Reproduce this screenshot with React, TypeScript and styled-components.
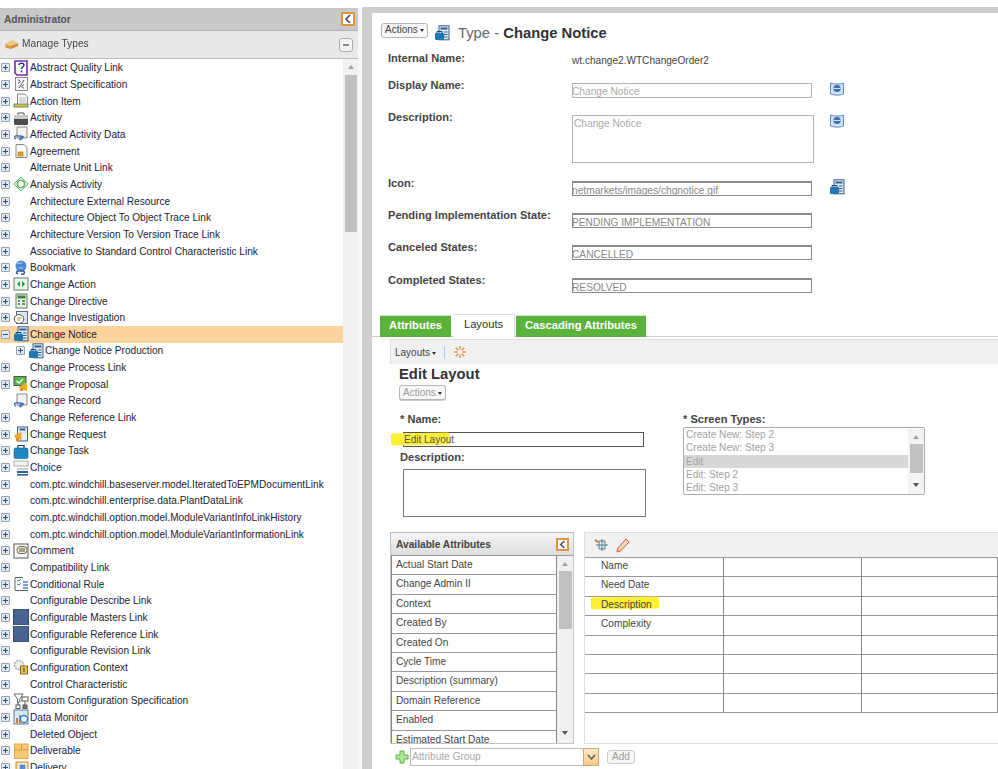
import React from "react";
import styled, { createGlobalStyle } from "styled-components";

const Global = createGlobalStyle`
  html, body { margin: 0; padding: 0; height: 769px; overflow: hidden; background: #fff; }
  body { font-family: "Liberation Sans", Arial, sans-serif; color: #333; }
  * { box-sizing: border-box; }
`;

const Page = styled.div`
  display: grid; grid-template-columns: 358px 4px 1fr; width: 998px; height: 769px; overflow: hidden;
  padding-top: 8px; filter: blur(0.3px);
`;
const Sidebar = styled.aside`display: flex; flex-direction: column; height: 761px; overflow: hidden;`;
const SideHeader = styled.div`
  height: 23px; flex: none; background: #c9c9c9; border-bottom: 1px solid #b0b0b0;
  display: flex; align-items: center; justify-content: space-between; padding: 0 3px 0 4px;
  font-size: 10.2px; font-weight: bold; color: #555;
`;
const Collapse = styled.span<{ $size?: number }>`
  width: ${p => p.$size ?? 14}px; height: ${p => p.$size ?? 14}px; border: 2px solid #e0973c; background: #fff;
  display: inline-flex; align-items: center; justify-content: center;
`;
const Accordion = styled.div`
  height: 28px; flex: none; background: #e9e9e9; border-bottom: 1px solid #bbb;
  display: flex; align-items: center; padding: 0 5px 0 4px; font-size: 10.2px; color: #444;
`;
const AccordionTitle = styled.span`margin-left: 3px; flex: 1; position: relative; top: -1px;`;
const MinusBtn = styled.span`
  width: 14px; height: 14px; border: 1px solid #aaa; border-radius: 3px; background: #f4f4f4;
  display: inline-flex; align-items: center; justify-content: center;
  &::after { content: ""; width: 6px; height: 2px; background: #888; }
`;
const TreeWrap = styled.div`display: grid; grid-template-columns: 343px 15px; flex: 1; min-height: 0;`;
const Tree = styled.ul`
  margin: 0; padding: 0.5px 0 0; list-style: none; overflow: hidden; background: #fff;
  display: grid; grid-auto-rows: 16.66px; align-content: start;
`;
const Row = styled.li<{ $selected?: boolean; $child?: boolean }>`
  display: flex; align-items: center; height: 16.66px; white-space: nowrap;
  padding-left: ${p => (p.$child ? 16 : 1)}px;
  background: ${p => (p.$selected ? "#fbd39c" : "transparent")};
  font-size: 10.15px; color: #1c2330;
`;
const Expander = styled.span<{ $open?: boolean; $hidden?: boolean }>`
  flex: none; width: 9px; height: 9px; border: 1px solid #9aa3ad; border-radius: 1px; background: #dfe9f3;
  position: relative; visibility: ${p => (p.$hidden ? "hidden" : "visible")};
  &::before { content: ""; position: absolute; left: 1px; right: 1px; top: 3px; height: 1px; background: #33507a; }
  &::after { content: ""; position: absolute; top: 1px; bottom: 1px; left: 3px; width: 1px; background: #33507a; display: ${p => (p.$open ? "none" : "block")}; }
`;
const IconSlot = styled.span`
  flex: none; width: 16px; height: 16px; margin: 0 1px 0 3px; display: inline-flex;
`;
const Scroll = styled.div`
  background: #f1f1f1; position: relative; display: flex; flex-direction: column; align-items: center;
`;
const ScrollThumb = styled.div<{ $top: number; $h: number }>`
  position: absolute; left: 2px; right: 1px; top: ${p => p.$top}px; height: ${p => p.$h}px; background: #c1c1c1;
`;
const ArrowUp = styled.span<{ $top: number }>`
  position: absolute; top: ${p => p.$top}px; left: 50%; margin-left: -3px;
  border: 3px solid transparent; border-top: 0; border-bottom: 4px solid #a3a3a3;
`;
const ArrowDown = styled.span<{ $bottom: number }>`
  position: absolute; bottom: ${p => p.$bottom}px; left: 50%; margin-left: -3px;
  border: 3px solid transparent; border-bottom: 0; border-top: 4px solid #555;
`;

const Gutter = styled.div`background: #f7f7f7;`;
const Main = styled.main`
  border-left: 10px solid #cdcdcd; border-top: 6px solid #cdcdcd; margin-top: -1px; height: 762px; overflow: hidden;
  background: #fff; display: flex; flex-direction: column; font-size: 11px;
`;
const Details = styled.section`height: 300px; flex: none; padding: 10px 0 0 8px; overflow: hidden;`;
const TitleRow = styled.div`display: flex; align-items: center; height: 20px; padding-left: 1px;`;
const ActionsBtn = styled.span<{ $disabled?: boolean; $raised?: boolean }>`
  display: inline-flex; align-items: center; gap: 2px; width: 47px; height: 15px; padding: 0 0 ${p => (p.$raised ? 2 : 0)}px 3px;
  border: 1px solid #b5b5b5; border-radius: 3px; background: #f8f8f8;
  font-size: 10px; color: ${p => (p.$disabled ? "#9a9a9a" : "#444")};
  box-shadow: ${p => (p.$disabled ? "0 1px 0 #ccc" : "none")};
  align-self: ${p => (p.$raised ? "flex-start" : "auto")};
`;
const Caret = styled.span`
  display: inline-block; border: 2.5px solid transparent; border-bottom: 0; border-top: 3px solid #333; margin-top: 2px;
`;
const TitleIcon = styled.span`display: inline-flex; width: 16px; height: 16px; margin: 0 8px 0 6px;`;
const Title = styled.h1`
  margin: 0; font-size: 14.8px; font-weight: normal; color: #666;
  & b { color: #333; font-weight: bold; }
`;
const FormRow = styled.div<{ $h: number; $first?: boolean }>`
  display: grid; grid-template-columns: 184px 257px 20px; height: ${p => p.$h}px; padding-left: 8px;
  margin-top: ${p => (p.$first ? 8 : 0)}px;
`;
const Label = styled.label`font-size: 11.1px; font-weight: bold; color: #444; line-height: 14px;`;
const Value = styled.span`font-size: 10.1px; color: #444; padding-top: 3px; line-height: 14px;`;
const ReadField = styled.div<{ $strong?: boolean; $tall?: boolean }>`
  margin-top: 5px; width: ${p => (p.$tall ? 242 : 240)}px; height: ${p => (p.$tall ? 48 : 15)}px;
  border: 1px solid ${p => (p.$strong ? "#8a8a8a" : "#b4b4b4")}; border-top-width: ${p => (p.$strong ? 2 : 1)}px;
  font-size: 10.2px; line-height: ${p => (p.$tall ? 14 : 15)}px; color: ${p => (p.$strong ? "#888" : "#aaa")};
  padding: ${p => (p.$tall ? "1px 1px" : "0 0")}; white-space: nowrap; overflow: hidden;
  text-indent: ${p => (p.$tall ? 0 : -1)}px;
`;
const SideIcon = styled.span`margin: 3px 0 0 0; width: 16px; height: 16px; display: inline-flex;`;

const Tabs = styled.nav`
  display: flex; align-items: flex-end; height: 24px; flex: none; padding-left: 8px; border-bottom: 1px solid #ccc;
`;
const Tab = styled.span<{ $active?: boolean; $w: number }>`
  width: ${p => p.$w}px; height: ${p => (p.$active ? 23 : 22)}px; margin-right: ${p => (p.$active ? 1 : 2)}px; display: flex; align-items: center; justify-content: center;
  background: ${p => (p.$active ? "#fff" : "#5bb33b")}; color: ${p => (p.$active ? "#333" : "#fff")};
  font-size: 11.2px; font-weight: ${p => (p.$active ? "normal" : "bold")};
  border-right: ${p => (p.$active ? "1px solid #ddd" : "0")}; border-top: 1px solid #ddd;
  margin-bottom: -1px; padding-bottom: 4px;
`;
const LayoutPane = styled.section`padding: 2px 0 0 18px; flex: 1; min-height: 0;`;
const Toolbar = styled.div`
  display: flex; align-items: center; height: 25px; background: #f1f1f1; border-top: 1px solid #ddd; border-left: 1px solid #ddd;
  padding-left: 4px; font-size: 10px; color: #444; gap: 2px;
`;
const Sep = styled.span`width: 1px; height: 13px; background: #b7cbe0; margin: 0 6px 0 6px;`;
const EditHead = styled.h2`margin: 2px 0 2px 9px; font-size: 14.8px; line-height: 17px; font-weight: bold; color: #333;`;
const EditActions = styled.div`margin-left: 9px; height: 26px;`;
const Columns = styled.div`display: grid; grid-template-columns: 283px 260px; padding: 1px 0 0 10px; height: 106px;`;
const ColLeft = styled.div`display: flex; flex-direction: column;`;
const FieldLabel = styled.span<{ $mt?: number }>`
  font-size: 11.1px; font-weight: bold; color: #444; line-height: 14px; margin-top: ${p => p.$mt ?? 0}px;
`;
const NameInput = styled.div`
  position: relative; width: 241px; height: 15px; margin: 6px 0 0 3px; border: 1px solid #555; font-size: 10px; line-height: 13px; color: #555; padding-left: 0;
`;
const Highlight = styled.span<{ $l: number; $t: number; $w: number; $h: number }>`
  position: absolute; left: ${p => p.$l}px; top: ${p => p.$t}px; width: ${p => p.$w}px; height: ${p => p.$h}px;
  background: #fbf032; border-radius: 2px; z-index: 0; transform: rotate(-1deg);
`;
const HiText = styled.span`position: relative; z-index: 1;`;
const Area = styled.div`width: 243px; height: 48px; margin: 5px 0 0 3px; border: 1px solid #777;`;
const ListBox = styled.div`
  position: relative; width: 242px; height: 68px; margin-top: 1px; border: 1px solid #aaa; border-radius: 2px;
  font-size: 10.1px; color: #a2a2a2; overflow: hidden;
`;
const ListItem = styled.div<{ $sel?: boolean }>`
  height: 13.3px; line-height: 13px; padding-left: 2px; margin-right: 16px; background: ${p => (p.$sel ? "#d8d8d8" : "transparent")};
`;
const ListScroll = styled.div`position: absolute; right: 0; top: 0; bottom: 0; width: 16px; background: #f4f4f4;`;

const Builder = styled.div`display: grid; grid-template-columns: 184px 414px; column-gap: 10px; margin-top: 15px;`;
const AvailPanel = styled.div`height: 212px; border: 1px solid #c4c4c4; border-top: 1px solid #bbb; display: flex; flex-direction: column;`;
const AvailHead = styled.div`
  height: 23px; flex: none; display: flex; align-items: center; justify-content: space-between; padding: 0 4px 0 5px;
  background: linear-gradient(#f4f4f4, #dedede); border-bottom: 1px solid #999; font-size: 10.2px; font-weight: bold; color: #444;
`;
const AvailBody = styled.div`display: grid; grid-template-columns: 166px 16px; flex: 1; min-height: 0;`;
const AvailList = styled.div`overflow: hidden; border-left: 1px solid #888;`;
const AvailRow = styled.div`
  height: 19.4px; line-height: 17px; padding-left: 4px; border-bottom: 1px solid #999; border-right: 1px solid #888; font-size: 10.15px; color: #444; white-space: nowrap;
`;
const CanvasPanel = styled.div`height: 212px; border: 1px solid #ddd; border-right: 0; overflow: hidden;`;
const CanvasBar = styled.div`height: 25px; background: #f1f1f1; padding-left: 9px; display: flex; align-items: center; gap: 4px; border-bottom: 1px solid #999;`;
const Grid = styled.div`display: grid; grid-template-columns: 139px 138px 1fr; grid-auto-rows: 19.4px;`;
const Cell = styled.div`
  border-bottom: 1px solid #999; border-right: 1px solid #888; font-size: 10.15px; line-height: 15px; color: #444; padding-left: 16px; position: relative; white-space: nowrap;
`;
const BottomBar = styled.div`display: flex; align-items: center; width: 260px; height: 18px; margin-top: 4px; padding-left: 5px;`;
const PlusIcon = styled.svg`flex: none; width: 14px; height: 14px;`;
const Combo = styled.div`
  display: flex; flex: none; width: 189px; height: 18px; margin-left: 1px; border: 1px solid #bbb; font-size: 10.15px; color: #aaa; line-height: 16px;
`;
const ComboText = styled.span`flex: 1; padding-left: 1px;`;
const ComboBtn = styled.span`
  width: 16px; background: linear-gradient(#fbe7c8, #f3c98a); display: flex; align-items: center; justify-content: center; margin: -1px -1px -1px 0; border: 1px solid #c9a874;
`;
const AddBtn = styled.span`
  flex: none; width: 28px; height: 14px; margin-left: 8px; border: 1px solid #ccc; border-radius: 3px; font-size: 10px; line-height: 12px; text-align: center; color: #999; background: #f6f6f6;
`;

const S = styled.svg`width: 100%; height: 100%; display: block;`;

const Chevron = () => (
  <S viewBox="0 0 10 10"><path d="M7 1 3 5l4 4" fill="none" stroke="#444" strokeWidth="1.6" /></S>
);

const icons: Record<string, React.ReactNode> = {
  q: <><path d="M2 1h12v14H4l-2-2z" fill="#fff" stroke="#7a2aa8" strokeWidth="1.6" /><path d="M6 5c0-2.4 5-2.4 5 0 0 2-2.5 2-2.5 4" fill="none" stroke="#2a2a9a" strokeWidth="1.5" /><rect x="7.7" y="10.5" width="1.6" height="1.8" fill="#2a2a9a" /></>,
  spec: <><rect x="2.5" y="1.5" width="12" height="13" fill="#f6f6f6" stroke="#888" /><path d="M5 4c3 0 3 3 0 3m6-3-5 8m5-3c-3 0-3 3 0 3" fill="none" stroke="#556" /></>,
  action: <><path d="M4.5 1h7l3 3v8h-10z" fill="#fafafa" stroke="#888" /><path d="M6 5h7M6 7h7M6 9h7" stroke="#bbb" /><rect x="1" y="11" width="14" height="3" fill="#c9cf4a" stroke="#555" strokeWidth=".7" /></>,
  case: <><path d="M5 5V3h6v2" fill="none" stroke="#555" /><rect x="1" y="5" width="14" height="10" rx="1.5" fill="#4c4c4c" /><rect x="1" y="5" width="14" height="4" rx="1" fill="#c9c9c9" /></>,
  link: <><path d="M4 1h10v11H4z" fill="#f2f2f2" stroke="#888" /><path d="M3 13c-3-1-1-4 2-3h3c3 1 1 4-2 3m2 1c-2-1 0-4 3-3" fill="none" stroke="#4a77b0" strokeWidth="1.5" /></>,
  seal: <><path d="M3 1.500h8l3 3v10H3z" fill="#fafafa" stroke="#8a8a8a" /><rect x="5" y="9" width="5" height="4" fill="#e9a521" stroke="#a56a10" strokeWidth=".6" /></>,
  diamond: <><path d="M8 1l7 7-7 7-7-7z" fill="#eefbea" stroke="#58b35a" /><circle cx="8" cy="8" r="3.600" fill="#fff" stroke="#4caa58" strokeWidth="1.4" /></>,
  globe: <><circle cx="8" cy="6" r="5.500" fill="#4e8bd6" /><path d="M4 4c2-2 3 0 5-1M6 8c2-1 3 1 4 0" stroke="#cfe4f8" fill="none" /><path d="M5 14c-3-1-1-4 2-3h3c3 1 1 4-2 3" fill="none" stroke="#335f9a" strokeWidth="1.5" /></>,
  cact: <><rect x="1" y="2" width="14" height="12" fill="#eef6ea" stroke="#777" /><path d="M7 5 4 8l3 3zM9 5l3 3-3 3z" fill="#2f9a44" /></>,
  calc: <><rect x="3" y="1" width="11" height="14" fill="#e9f2e4" stroke="#5c7a5a" /><rect x="4.500" y="2.500" width="8" height="3" fill="#3f7f4a" /><path d="M5 8h2M9 8h3M5 11h2M9 11h3" stroke="#2d7a3d" strokeWidth="1.5" /></>,
  inv: <><rect x="3.500" y="1.500" width="11" height="12" fill="#dbe7ef" stroke="#5b6a78" /><ellipse cx="6" cy="9" rx="4.800" ry="4.500" fill="#fff" stroke="#555" /><path d="M4 8h5M4 10h3" stroke="#a8a040" strokeWidth="1.2" /></>,
  notice: <><rect x="5" y="0.800" width="10" height="14" fill="#dfe9f3" stroke="#3a5f88" /><rect x="6.500" y="2.500" width="7" height="2" fill="#2e5e93" /><path d="M10 7h3.500M10 9.500h3.500M10 12h3.500" stroke="#35608e" /><path d="M3 8V6.500h5V8" fill="none" stroke="#14456f" /><rect x="1" y="8" width="9" height="7" rx="1" fill="#1f78b4" /></>,
  prop: <><rect x="1" y="0.500" width="12" height="9" fill="#58b94a" stroke="#555" /><path d="M3.500 5l2.500 2 4-4" fill="none" stroke="#fff" strokeWidth="1.5" /><path d="M6 11l8-5v9l-8-3z" fill="#f2ae2c" /><rect x="7" y="12" width="3" height="3" fill="#d8901e" /></>,
  req: <><rect x="4.500" y="1" width="10" height="14" fill="#e4edf5" stroke="#3a5f88" /><rect x="6.500" y="2.500" width="6" height="2" fill="#2e5e93" /><path d="M1.500 9l7-3v8l-7-2.500z" fill="#f0a92c" /><rect x="3" y="12" width="3" height="3" fill="#d8901e" /></>,
  task: <><path d="M5 5V2.500h6V5" fill="none" stroke="#14456f" strokeWidth="1.2" /><rect x="1" y="5" width="14" height="10.500" rx="1.500" fill="#1d88c4" stroke="#15628f" strokeWidth=".6" /></>,
  choice: <><rect x="1" y="1" width="14" height="5" fill="#f3f3f3" stroke="#aaa" /><rect x="4" y="8" width="11" height="2" fill="#c5ccd6" /><rect x="4" y="11" width="11" height="2" fill="#2e5e93" /><rect x="4" y="14" width="11" height="1.600" fill="#2e5e93" /></>,
  comment: <><rect x="1" y="1" width="14" height="14" fill="#fff" stroke="#555" /><rect x="4" y="3.500" width="10" height="7" rx="3" fill="#f1eecb" stroke="#666" /><path d="M6 6h6M6 8h6" stroke="#555" /></>,
  rule: <><path d="M2 1.500h8M2 1.500v13h13" fill="none" stroke="#666" /><path d="M4 4l2 1 2-2M4 8l2 1 2-2" fill="none" stroke="#3d8a46" /><path d="M10 6h5M10 9h5M10 12h5" stroke="#4c84c9" strokeWidth="1.4" /></>,
  square: <rect x="0.500" y="0" width="15" height="16" fill="#46648f" stroke="#2e4a70" />,
  gear: <><circle cx="6" cy="6" r="4.500" fill="#eee" stroke="#aaa" strokeDasharray="2 1" strokeWidth="1.6" /><rect x="7.500" y="7" width="7" height="8" fill="#e2c35c" stroke="#8c6b1d" /><rect x="10" y="9" width="2" height="4" fill="#9c7a20" /></>,
  filter: <><path d="M1 1h9L6.800 6v3L4.500 10V6z" fill="#fff" stroke="#666" /><rect x="9" y="4" width="6" height="4" fill="#fff" stroke="#555" /><rect x="3" y="12" width="4" height="3.500" fill="#fff" stroke="#555" /><rect x="10" y="12" width="4" height="3.500" fill="#777" stroke="#555" /><path d="M12 8v4M5 10v2" stroke="#555" /></>,
  monitor: <><rect x="1" y="1" width="14" height="14" fill="#dbe7f2" stroke="#5f7a98" /><path d="M3 14V9h2v5zM6 14V6h2v8z" fill="#d97a2a" /><circle cx="11" cy="10" r="3.500" fill="#fff" stroke="#2a7fbe" strokeWidth="1.3" /></>,
  box: <><rect x="1.500" y="1" width="13.500" height="14.500" fill="#f6ca72" stroke="#e7a84a" /><path d="M8.500 1v6M1.500 7h13.500" stroke="#d59a45" /></>,
  deliv: <><rect x="3" y="3" width="12" height="12" fill="#f2d69a" stroke="#c9923c" /><rect x="6" y="5" width="7" height="7" fill="#5c8fd0" stroke="#fff" /></>,
  bookglobe: <><path d="M1.500 2c4 1.500 9 1.500 13 0v11c-4 1.500-9 1.500-13 0z" fill="#cfe2f4" stroke="#5d8fc0" /><circle cx="8" cy="7.500" r="3.600" fill="#3a72b8" /><path d="M4.600 7.500h6.800" stroke="#cfe2f4" /></>,
  spark: <path d="M7 1v3.500M7 9.500V13M1 7h3.500M9.500 7H13M2.800 2.800l2.400 2.400M8.800 8.800l2.400 2.400M11.200 2.800 8.800 5.200M5.200 8.800l-2.400 2.400" stroke="#f0934c" strokeWidth="1.5" fill="none" />,
  layoutTool: <><path d="M2 8h12M8 2v12M5 4h6v8H5z" fill="none" stroke="#4f7d92" /><path d="M1 3l3 2" stroke="#c9642c" strokeWidth="1.6" /></>,
  pencil: <path d="M3 15l1-4L12 2l3 3-8.500 9z" fill="#f4d9b8" stroke="#d2583c" />,
  plus: <path d="M5 1h4v4h4v4H9v4H5V9H1V5h4z" fill="#b4e79a" stroke="#58b33c" />,
};

const Icon = ({ name }: { name: string }) => <S viewBox="0 0 16 16">{icons[name]}</S>;

type Item = { t: string; i?: string; noExp?: boolean; open?: boolean; sel?: boolean; child?: boolean };
const rows: Item[] = [
  { t: "Abstract Quality Link", i: "q" }, { t: "Abstract Specification", i: "spec" }, { t: "Action Item", i: "action" },
  { t: "Activity", i: "case" }, { t: "Affected Activity Data", i: "link" }, { t: "Agreement", i: "seal" },
  { t: "Alternate Unit Link" }, { t: "Analysis Activity", i: "diamond" }, { t: "Architecture External Resource" },
  { t: "Architecture Object To Object Trace Link" }, { t: "Architecture Version To Version Trace Link" },
  { t: "Associative to Standard Control Characteristic Link" }, { t: "Bookmark", i: "globe" }, { t: "Change Action", i: "cact" },
  { t: "Change Directive", i: "calc" }, { t: "Change Investigation", i: "inv" }, { t: "Change Notice", i: "notice", open: true, sel: true },
  { t: "Change Notice Production", i: "notice", child: true }, { t: "Change Process Link" }, { t: "Change Proposal", i: "prop" },
  { t: "Change Record", i: "link", noExp: true }, { t: "Change Reference Link" }, { t: "Change Request", i: "req" },
  { t: "Change Task", i: "task" }, { t: "Choice", i: "choice" }, { t: "com.ptc.windchill.baseserver.model.IteratedToEPMDocumentLink" },
  { t: "com.ptc.windchill.enterprise.data.PlantDataLink" }, { t: "com.ptc.windchill.option.model.ModuleVariantInfoLinkHistory" },
  { t: "com.ptc.windchill.option.model.ModuleVariantInformationLink" }, { t: "Comment", i: "comment" }, { t: "Compatibility Link" },
  { t: "Conditional Rule", i: "rule" }, { t: "Configurable Describe Link" }, { t: "Configurable Masters Link", i: "square" },
  { t: "Configurable Reference Link", i: "square" }, { t: "Configurable Revision Link" }, { t: "Configuration Context", i: "gear" },
  { t: "Control Characteristic" }, { t: "Custom Configuration Specification", i: "filter" }, { t: "Data Monitor", i: "monitor" },
  { t: "Deleted Object" }, { t: "Deliverable", i: "box" }, { t: "Delivery", i: "deliv" },
];

const avail = ["Actual Start Date", "Change Admin II", "Context", "Created By", "Created On", "Cycle Time", "Description (summary)", "Domain Reference", "Enabled", "Estimated Start Date"];
const gridRows = ["Name", "Need Date", "Description", "Complexity", "", "", "", ""];

export default function App() {
  return (
    <Page>
      <Global />
      <Sidebar>
        <SideHeader>Administrator<Collapse><Chevron /></Collapse></SideHeader>
        <Accordion>
          <svg width="15" height="11" viewBox="0 0 15 11"><path d="M1 5l7-4 6 3-7 3z" fill="#f1c681" /><path d="M1 5l6 2v3L2 9z" fill="#d99a45" /><path d="M7 7l7-3v3l-7 3z" fill="#c98a3a" /></svg>
          <AccordionTitle>Manage Types</AccordionTitle>
          <MinusBtn />
        </Accordion>
        <TreeWrap>
          <Tree>
            {rows.map(r => (
              <Row key={r.t} $selected={r.sel} $child={r.child}>
                <Expander $open={r.open} $hidden={r.noExp} />
                <IconSlot>{r.i && <Icon name={r.i} />}</IconSlot>
                {r.t}
              </Row>
            ))}
          </Tree>
          <Scroll>
            <ArrowUp $top={6} />
            <ScrollThumb $top={16} $h={157} />
          </Scroll>
        </TreeWrap>
      </Sidebar>
      <Gutter />
      <Main>
        <Details>
          <TitleRow>
            <ActionsBtn $raised>Actions<Caret /></ActionsBtn>
            <TitleIcon><Icon name="notice" /></TitleIcon>
            <Title>Type - <b>Change Notice</b></Title>
          </TitleRow>
          <FormRow $h={27} $first>
            <Label>Internal Name:</Label><Value>wt.change2.WTChangeOrder2</Value><span />
          </FormRow>
          <FormRow $h={32}>
            <Label>Display Name:</Label><ReadField>Change Notice</ReadField><SideIcon><Icon name="bookglobe" /></SideIcon>
          </FormRow>
          <FormRow $h={66}>
            <Label>Description:</Label><ReadField $tall>Change Notice</ReadField><SideIcon><Icon name="bookglobe" /></SideIcon>
          </FormRow>
          <FormRow $h={32}>
            <Label>Icon:</Label><ReadField $strong>netmarkets/images/chgnotice.gif</ReadField><SideIcon><Icon name="notice" /></SideIcon>
          </FormRow>
          <FormRow $h={32}>
            <Label>Pending Implementation State:</Label><ReadField $strong>PENDING IMPLEMENTATION</ReadField><span />
          </FormRow>
          <FormRow $h={33}>
            <Label>Canceled States:</Label><ReadField $strong>CANCELLED</ReadField><span />
          </FormRow>
          <FormRow $h={32}>
            <Label>Completed States:</Label><ReadField $strong>RESOLVED</ReadField><span />
          </FormRow>
        </Details>
        <Tabs>
          <Tab $w={71}>Attributes</Tab>
          <Tab $w={62} $active>Layouts</Tab>
          <Tab $w={130}>Cascading Attributes</Tab>
        </Tabs>
        <LayoutPane>
          <Toolbar>
            Layouts<Caret /><Sep />
            <svg width="14" height="14" viewBox="0 0 14 14">{icons.spark}</svg>
          </Toolbar>
          <EditHead>Edit Layout</EditHead>
          <EditActions><ActionsBtn $disabled>Actions<Caret /></ActionsBtn></EditActions>
          <Columns>
            <ColLeft>
              <FieldLabel>* Name:</FieldLabel>
              <NameInput>
                <Highlight $l={-13} $t={0} $w={59} $h={12} />
                <HiText>Edit Layout</HiText>
              </NameInput>
              <FieldLabel $mt={3}>Description:</FieldLabel>
              <Area />
            </ColLeft>
            <div>
              <FieldLabel>* Screen Types:</FieldLabel>
              <ListBox>
                <ListItem>Create New: Step 2</ListItem>
                <ListItem>Create New: Step 3</ListItem>
                <ListItem $sel>Edit</ListItem>
                <ListItem>Edit: Step 2</ListItem>
                <ListItem>Edit: Step 3</ListItem>
                <ListScroll>
                  <ArrowUp $top={7} />
                  <ScrollThumb $top={16} $h={29} />
                  <ArrowDown $bottom={7} />
                </ListScroll>
              </ListBox>
            </div>
          </Columns>
          <Builder>
            <div>
              <AvailPanel>
                <AvailHead>Available Attributes<Collapse $size={13}><Chevron /></Collapse></AvailHead>
                <AvailBody>
                  <AvailList>
                    {avail.map(a => <AvailRow key={a}>{a}</AvailRow>)}
                  </AvailList>
                  <Scroll>
                    <ArrowUp $top={6} />
                    <ScrollThumb $top={15} $h={58} />
                    <ArrowDown $bottom={8} />
                  </Scroll>
                </AvailBody>
              </AvailPanel>
              <BottomBar>
                <PlusIcon viewBox="0 0 14 14">{icons.plus}</PlusIcon>
                <Combo>
                  <ComboText>Attribute Group</ComboText>
                  <ComboBtn><svg width="9" height="7" viewBox="0 0 9 7"><path d="M1 1l3.500 4L8 1" fill="none" stroke="#555" strokeWidth="1.4" /></svg></ComboBtn>
                </Combo>
                <AddBtn>Add</AddBtn>
              </BottomBar>
            </div>
            <CanvasPanel>
              <CanvasBar>
                <svg width="16" height="16" viewBox="0 0 16 16">{icons.layoutTool}</svg>
                <svg width="16" height="16" viewBox="0 0 16 16">{icons.pencil}</svg>
              </CanvasBar>
              <Grid>
                {gridRows.map((g, i) => (
                  <React.Fragment key={i}>
                    <Cell>
                      {g === "Description" && <Highlight $l={6} $t={0} $w={68} $h={12} />}
                      <HiText>{g}</HiText>
                    </Cell>
                    <Cell /><Cell />
                  </React.Fragment>
                ))}
              </Grid>
            </CanvasPanel>
          </Builder>
        </LayoutPane>
      </Main>
    </Page>
  );
}
